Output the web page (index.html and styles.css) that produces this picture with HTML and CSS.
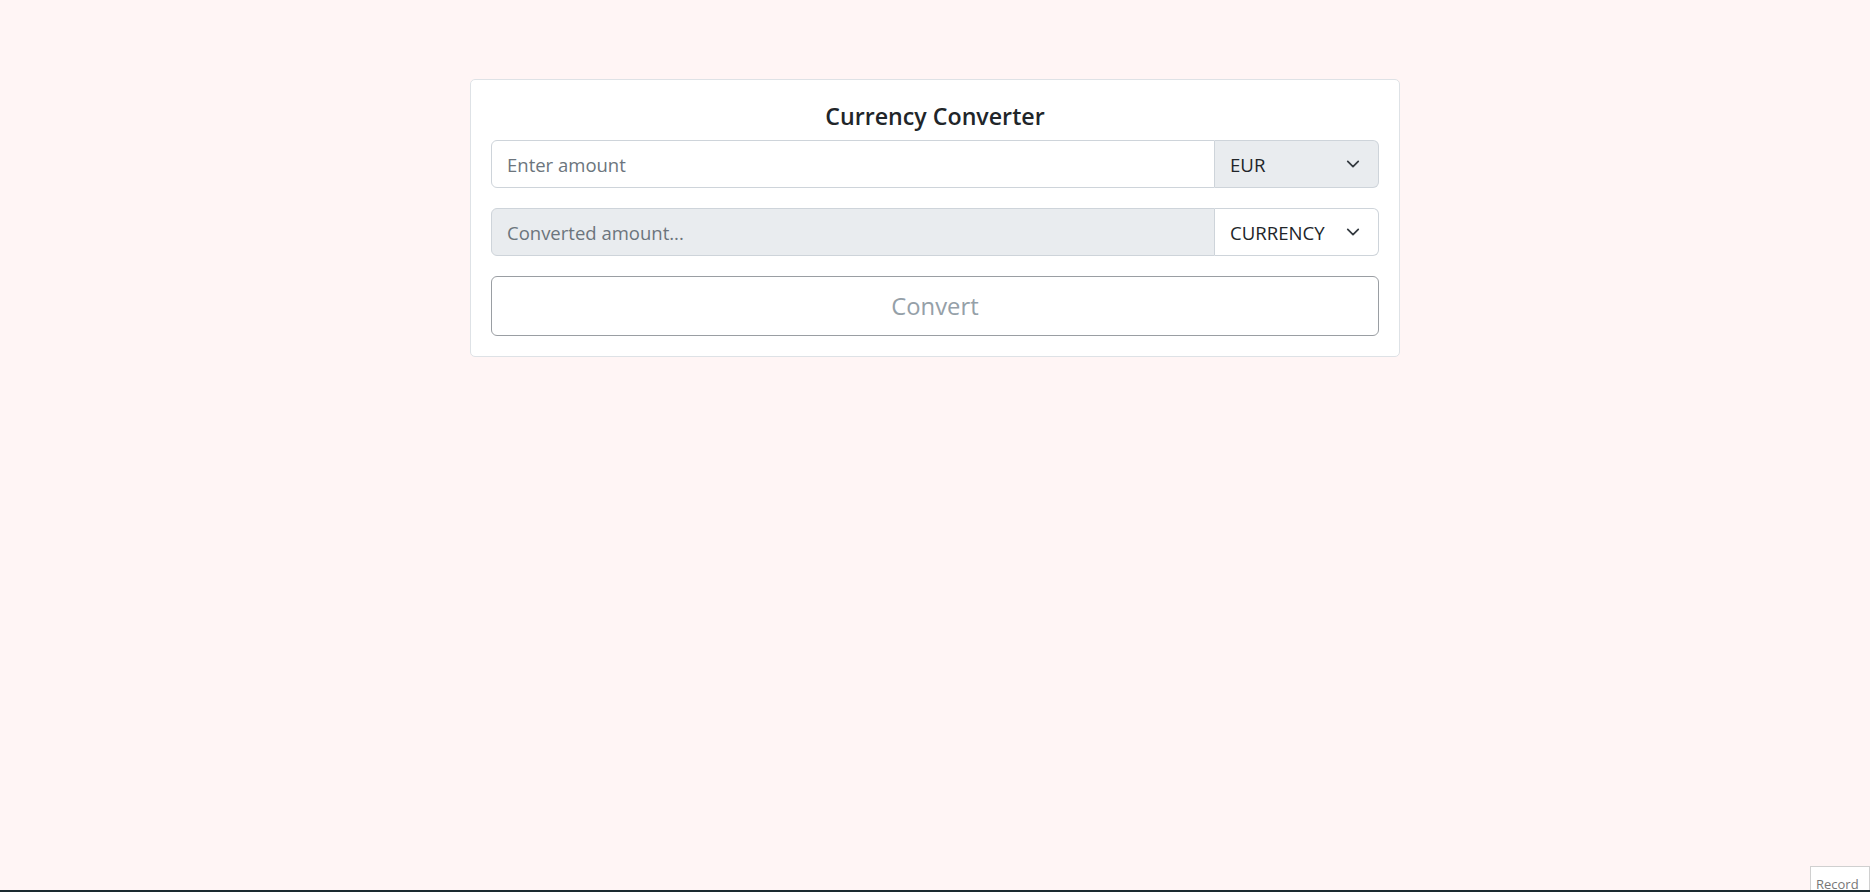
FILE: index.html
```html
<!DOCTYPE html>
<html lang="en">
<head>
<meta charset="utf-8">
<title>Currency Converter</title>
<link rel="stylesheet" href="styles.css">
</head>
<body>
<main class="page">
  <section class="card">
    <h1 class="title">Currency Converter</h1>
    <div class="input-group">
      <input class="field" type="text" placeholder="Enter amount">
      <div class="select select-muted">
        <span class="select-label">EUR</span>
        <svg class="chevron" viewBox="0 0 16 16" width="14" height="14"><path d="M2 5l6 6 6-6" fill="none" stroke="#343a40" stroke-width="2" stroke-linecap="round" stroke-linejoin="round"/></svg>
      </div>
    </div>
    <div class="input-group">
      <input class="field field-disabled" type="text" placeholder="Converted amount..." disabled>
      <div class="select">
        <span class="select-label">CURRENCY</span>
        <svg class="chevron" viewBox="0 0 16 16" width="14" height="14"><path d="M2 5l6 6 6-6" fill="none" stroke="#343a40" stroke-width="2" stroke-linecap="round" stroke-linejoin="round"/></svg>
      </div>
    </div>
    <button class="convert" type="button" disabled>Convert</button>
  </section>
</main>
<div class="record">Record</div>
<div class="bottom-bar"></div>
</body>
</html>
```
FILE: styles.css
```css
* { box-sizing: border-box; }
html, body { height: 100%; }
body {
  margin: 0;
  background: #fff5f5;
  font-family: "Open Sans", "Noto Sans", sans-serif;
  color: #212529;
  position: relative;
  overflow: hidden;
}
.page {
  display: flex;
  justify-content: center;
  padding-top: 79px;
}
.card {
  width: 930px;
  background: #fff;
  border: 1px solid #dee2e6;
  border-radius: 5px;
  padding: 20px;
  display: flex;
  flex-direction: column;
}
.title {
  margin: 0 0 8px;
  text-align: center;
  font-size: 23.2px;
  font-weight: 600;
  line-height: 32px;
  color: #212529;
}
.input-group {
  display: flex;
  height: 48px;
  margin-bottom: 20px;
}
.field {
  flex: 1;
  min-width: 0;
  border: 1px solid #ced4da;
  border-radius: 6px 0 0 6px;
  padding: 0 15px;
  font-family: inherit;
  font-size: 18.5px;
  color: #212529;
  background: #fff;
  outline: none;
}
.field::placeholder { color: #6c757d; }
.field-disabled { background: #e9ecef; }
.select {
  width: 164px;
  border: 1px solid #ced4da;
  border-left: none;
  border-radius: 0 6px 6px 0;
  background: #fff;
  display: flex;
  align-items: center;
  justify-content: space-between;
  padding: 0 18px 0 15px;
  font-size: 18.6px;
  color: #212529;
}
.select-muted { background: #e9ecef; }
.chevron { flex: none; }
.convert {
  height: 60px;
  border: 1px solid #9a9ea3;
  border-radius: 6px;
  background: #fff;
  color: #95a0a8;
  font-family: inherit;
  font-size: 23.8px;
  padding: 0;
}
.record {
  position: absolute;
  right: 0;
  bottom: 2px;
  width: 60px;
  height: 24px;
  background: #fff;
  border: 1px solid #d0d0d0;
  border-bottom: none;
  color: #777;
  font-size: 13px;
  padding: 7px 0 0 5px;
  overflow: hidden;
  line-height: 20px;
}
.bottom-bar {
  position: absolute;
  left: 0;
  right: 0;
  bottom: 0;
  height: 2px;
  background: #1a2a30;
}
```
